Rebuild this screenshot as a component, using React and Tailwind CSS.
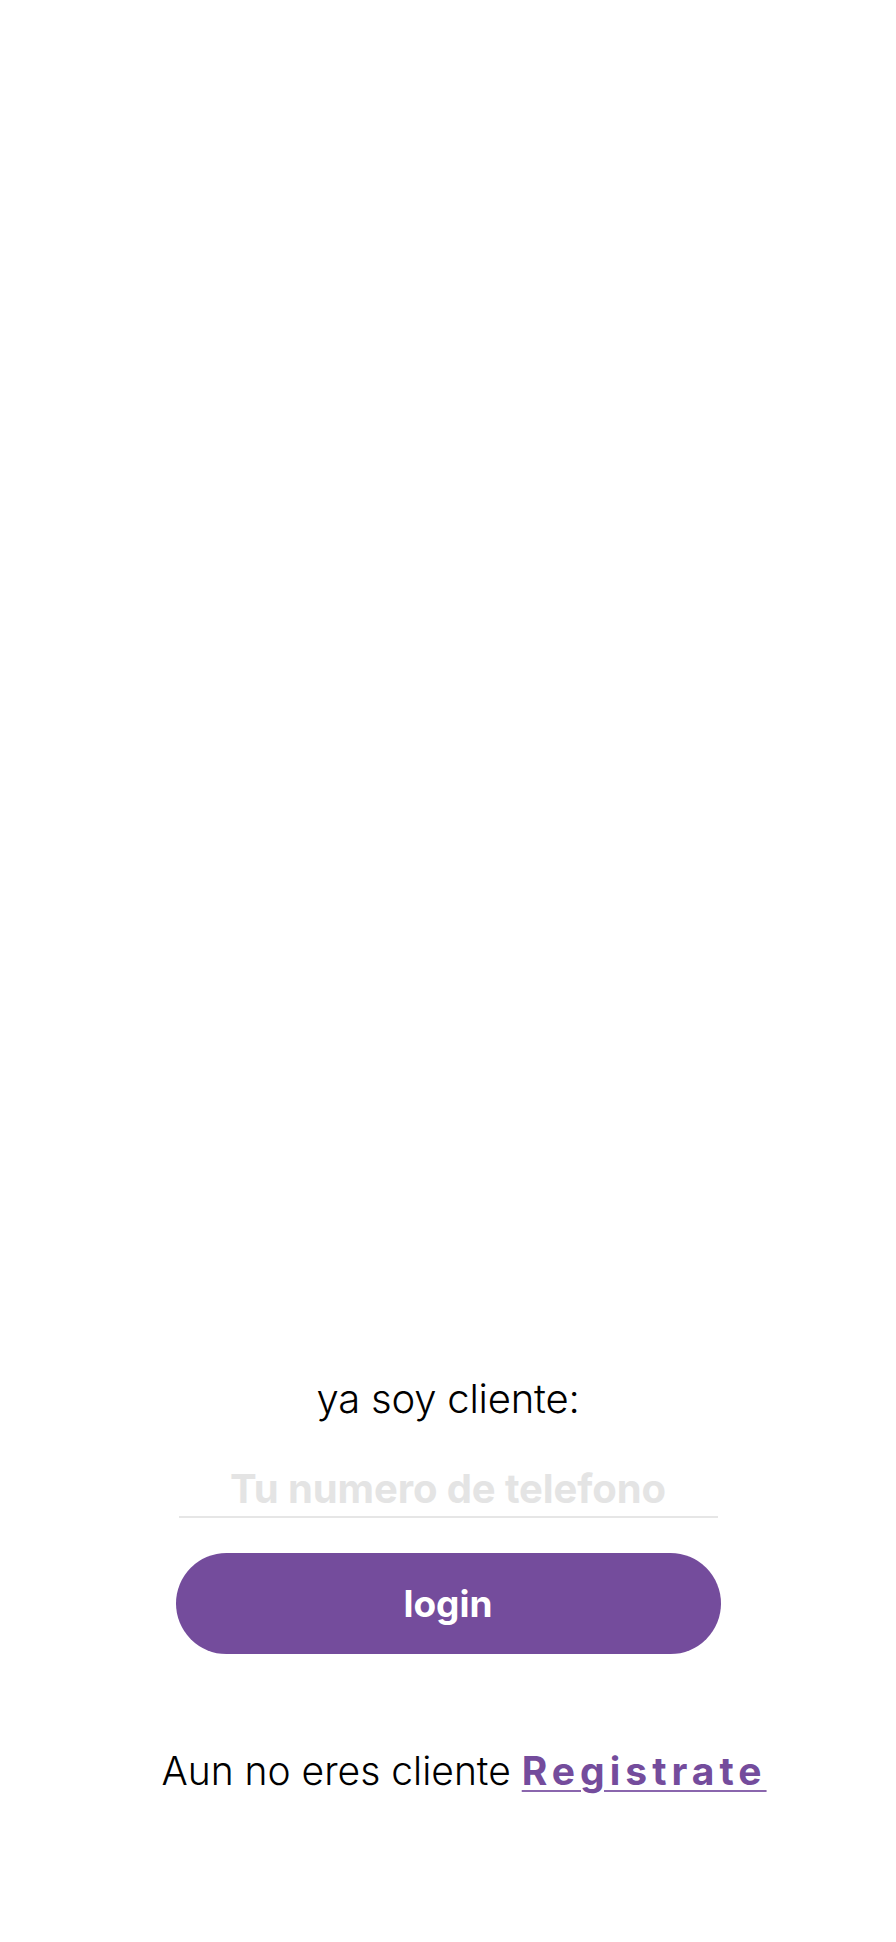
export default function App() {
  return (
    <div className="min-h-[1942px] w-full bg-white font-['Inter',sans-serif]">
      <div className="w-full flex flex-col items-center pt-[1375px]">
        <p className="text-[40px] font-light text-black leading-[48px] tracking-[-0.2px]">ya soy cliente:</p>
        <div className="mt-[42px] w-[539px] border-b-2 border-[#e6e6e6] pb-[3px]">
          <input
            className="w-full text-center text-[40px] font-bold text-[#333] placeholder:text-[#e4e4e4] outline-none bg-transparent leading-[48px] h-[48px] tracking-[-0.1px]"
            placeholder="Tu numero de telefono"
          />
        </div>
        <button className="mt-[35px] w-[545px] h-[101px] rounded-full bg-[#744c9c] text-white text-[37px] leading-[44px] font-bold flex items-center justify-center">
          login
        </button>
        <p className="mt-[93px] pl-[32px] text-[39px] font-light text-black leading-[48px]">
          Aun no eres cliente{" "}
          <a href="#" className="font-bold text-[#744c9c] tracking-[5px] underline decoration-2 decoration-[#8a66ad] underline-offset-[5px]">Registrate</a>
        </p>
      </div>
    </div>
  );
}
